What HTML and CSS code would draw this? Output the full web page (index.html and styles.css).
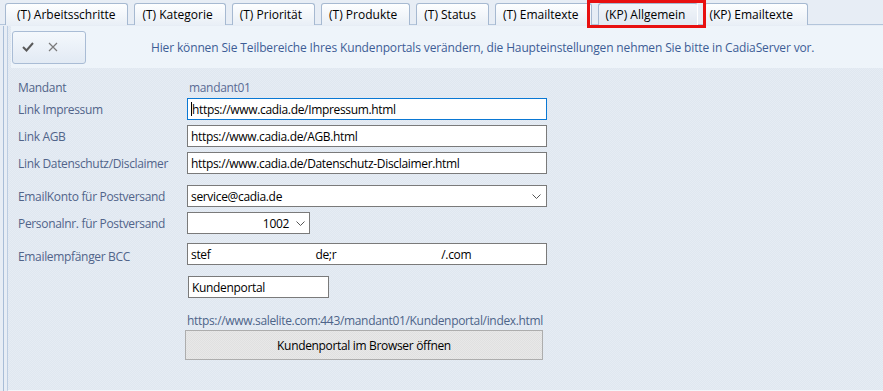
FILE: index.html
```html
<!DOCTYPE html>
<html lang="de">
<head>
    <meta charset="UTF-8">
    <title>Kundenportal - Allgemein</title>
    <link rel="stylesheet" href="styles.css">
</head>
<body>
    <div class="tabs">
        <div class="tab first">(T) Arbeitsschritte</div>
        <div class="tab">(T) Kategorie</div>
        <div class="tab">(T) Priorität</div>
        <div class="tab">(T) Produkte</div>
        <div class="tab">(T) Status</div>
        <div class="tab">(T) Emailtexte</div>
        <div class="tab active">(KP) Allgemein</div>
        <div class="tab last">(KP) Emailtexte</div>
    </div>
    <div class="highlight"></div>

    <div class="frame">
        <div class="panel">
            <div class="infobar">
                <div class="tool-btn">
                    <svg width="12" height="10" viewBox="0 0 12 10"><polyline points="1,5 4.5,8.5 11,1" fill="none" stroke="#5a5a5a" stroke-width="2"/></svg>
                    <svg width="10" height="10" viewBox="0 0 10 10"><path d="M1 1 L9 9 M9 1 L1 9" stroke="#7a7a7a" stroke-width="1.2"/></svg>
                </div>
                <p class="info-text">Hier können Sie Teilbereiche Ihres Kundenportals verändern, die Haupteinstellungen nehmen Sie bitte in CadiaServer vor.</p>
            </div>

            <div class="form">
                <div class="row first-row">
                    <label>Mandant</label>
                    <span class="value">mandant01</span>
                </div>
                <div class="row tight">
                    <label>Link Impressum</label>
                    <div class="field wide focused"><span class="caret"></span>https://www.cadia.de/Impressum.html</div>
                </div>
                <div class="row">
                    <label>Link AGB</label>
                    <div class="field wide">https://www.cadia.de/AGB.html</div>
                </div>
                <div class="row">
                    <label>Link Datenschutz/Disclaimer</label>
                    <div class="field wide">https://www.cadia.de/Datenschutz-Disclaimer.html</div>
                </div>
                <div class="row spaced">
                    <label>EmailKonto für Postversand</label>
                    <div class="field wide select">
                        <span>service@cadia.de</span>
                        <svg class="chevron" width="9" height="5" viewBox="0 0 9 5"><polyline points="0.5,0.5 4.5,4.5 8.5,0.5" fill="none" stroke="#555" stroke-width="1"/></svg>
                    </div>
                </div>
                <div class="row">
                    <label>Personalnr. für Postversand</label>
                    <div class="field short select">
                        <span class="num">1002</span>
                        <svg class="chevron" width="9" height="5" viewBox="0 0 9 5"><polyline points="0.5,0.5 4.5,4.5 8.5,0.5" fill="none" stroke="#555" stroke-width="1"/></svg>
                    </div>
                </div>
                <div class="row bcc">
                    <label class="low">Emailempfänger BCC</label>
                    <div class="field wide">stef<span class="blank b1"></span>de;r<span class="blank b2"></span>/.com</div>
                </div>
                <div class="row spaced-more">
                    <label></label>
                    <div class="field small">Kundenportal</div>
                </div>
                <div class="row url-row">
                    <label></label>
                    <span class="url">https://www.salelite.com:443/mandant01/Kundenportal/index.html</span>
                </div>
                <div class="row btn-row">
                    <label></label>
                    <button class="open-btn">Kundenportal im Browser öffnen</button>
                </div>
            </div>
        </div>
    </div>
</body>
</html>
```

FILE: styles.css
```css
body {
    margin: 0;
    width: 883px;
    height: 391px;
    overflow: hidden;
    background-color: #e7edf5;
    font-family: "Open Sans", "Noto Sans", sans-serif;
    font-size: 12px;
    position: relative;
}

/* Reiter oben */
.tabs {
    display: flex;
    gap: 6px;
    height: 25px;
    padding: 3px 0 0 5px;
    box-sizing: border-box;
    border-bottom: 1px solid #b3c5db;
}
.tab {
    height: 21px;
    line-height: 21px;
    padding: 0 12px 0 7px;
    border: 1px solid #a6b9d1;
    border-bottom: none;
    border-radius: 3px 3px 0 0;
    background: linear-gradient(#fdfeff, #e9eff6);
    color: #000;
    white-space: nowrap;
}
.tab.first {
    padding-left: 11px;
    padding-right: 12px;
}
.tab.active {
    padding-right: 12px;
    background: linear-gradient(#f1f5fa, #e2e9f2);
    border-right-color: #fff;
}
.tab.last {
    padding-left: 4px;
    padding-right: 14px;
}

/* rote Markierung um den aktiven Reiter */
.highlight {
    position: absolute;
    left: 587px;
    top: 0;
    width: 113px;
    height: 22px;
    border: 3px solid #e81010;
}

/* Inhaltsbereich */
.frame {
    height: 366px;
    margin-left: 3px;
    padding-left: 3px;
    border-left: 1px solid #a8bdd7;
}
.panel {
    height: 364px;
    border-left: 1px solid #bccde2;
    border-bottom: 2px solid #f3f6fa;
    background: repeating-conic-gradient(#dfe7f0 0 25%, #e6ecf4 0 50%) 0 0 / 2px 2px;
    letter-spacing: -0.33px;
}

.infobar {
    display: flex;
    align-items: center;
    height: 42px;
    margin: 1px 0 0 3px;
    padding-left: 1px;
    background-color: #eef4fa;
}
.tool-btn {
    display: flex;
    align-items: center;
    gap: 14px;
    width: 74px;
    height: 33px;
    box-sizing: border-box;
    padding-left: 9px;
    border: 1px solid #a9bcd5;
    border-radius: 3px;
    background: linear-gradient(#f4f8fc, #e2eaf4);
}
.info-text {
    margin: 0 0 0 65px;
    color: #3d5d96;
    white-space: nowrap;
    letter-spacing: -0.14px;
}

/* Formular */
.form {
    padding: 8px 0 0 10px;
}
.row {
    display: flex;
    align-items: center;
    height: 22px;
    margin-top: 5px;
}
.row.first-row { margin-top: 0; }
.row.tight { margin-top: 0; }
.row.spaced { margin-top: 11px; }
.row.bcc { margin-top: 9px; }
.row.spaced-more { margin-top: 11px; }
.row.url-row { margin-top: 12px; height: 20px; }
.row.btn-row { margin-top: 0; height: 30px; }

label {
    width: 169px;
    flex-shrink: 0;
    color: #51648a;
}
label.low {
    position: relative;
    top: 2px;
}
.value {
    color: #5a6b94;
    padding-left: 2px;
}

.field {
    display: flex;
    align-items: center;
    height: 22px;
    box-sizing: border-box;
    padding-left: 3px;
    border: 1px solid #7a7a7a;
    background: #fff;
    color: #000;
    white-space: nowrap;
}
.field.wide { width: 360px; }
.field.short { width: 123px; }
.field.small { width: 141px; margin-left: 1px; }
.field.focused { border-color: #0a78d4; }
.caret {
    width: 1px;
    height: 14px;
    background: #000;
}
.select {
    justify-content: space-between;
    padding-right: 5px;
}
.short.select {
    padding-right: 4px;
}
.select .num {
    margin-left: auto;
    margin-right: 7px;
}
.blank {
    display: inline-block;
    height: 1px;
}
.blank.b1 { width: 105px; }
.blank.b2 { width: 105px; }

.url {
    color: #4d6489;
}
.open-btn {
    width: 358px;
    height: 30px;
    margin-left: -2px;
    border: 1px solid #adadad;
    background: repeating-conic-gradient(#e0e0e0 0 25%, #e8e8e8 0 50%) 0 0 / 2px 2px;
    font-family: "Open Sans", "Noto Sans", sans-serif;
    font-size: 12px;
    letter-spacing: -0.33px;
    color: #000;
}
```
